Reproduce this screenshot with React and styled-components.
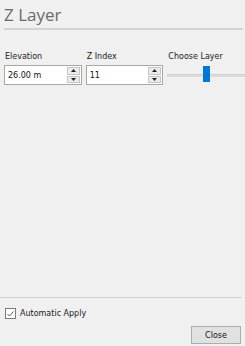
import React from 'react'
import styled, { createGlobalStyle } from 'styled-components'

const Global = createGlobalStyle`
  html, body {
    margin: 0;
    padding: 0;
    background: #f0f0f0;
  }
  body {
    font-family: 'DejaVu Sans', 'Liberation Sans', sans-serif;
  }
`

const Panel = styled.div`
  width: 245px;
  height: 346px;
  display: flex;
  flex-direction: column;
  background: #f0f0f0;
  box-sizing: border-box;
`

const Header = styled.div`
  padding: 4px 2px 0 4px;
`

const Title = styled.h1`
  margin: 0;
  font-family: 'Open Sans', 'Noto Sans', sans-serif;
  font-weight: 400;
  font-size: 17px;
  line-height: 22px;
  color: #6a6a6a;
`

const Rule = styled.div`
  height: 2px;
  margin-top: 2px;
  background: #d4d4d4;
`

const Fields = styled.div`
  display: flex;
  gap: 4px;
  padding: 22px 0 0 4px;
`

const Field = styled.div`
  display: flex;
  flex-direction: column;
  width: ${(p) => p.$width}px;
`

const Label = styled.span`
  font-size: 8px;
  line-height: 10px;
  color: #1a1a1a;
  margin-bottom: 3px;
  padding-left: 1px;
`

const Spin = styled.div`
  display: flex;
  align-items: center;
  height: 20px;
  box-sizing: border-box;
  border: 1px solid #a8a8a8;
  background: #fff;
  padding: 1px;
`

const SpinText = styled.span`
  flex: 1;
  font-size: 8px;
  color: #111;
  padding-left: 2px;
`

const Arrows = styled.div`
  display: flex;
  flex-direction: column;
  gap: 1px;
  width: 13px;
  height: 16px;
`

const Arrow = styled.div`
  flex: 1;
  display: flex;
  align-items: center;
  justify-content: center;
  background: #ebebeb;
  border: 1px solid #c6c6c6;
  box-sizing: border-box;
`

const Slider = styled.div`
  position: relative;
  height: 20px;
  display: flex;
  align-items: center;
`

const Track = styled.div`
  flex: 1;
  height: 2px;
  background: #dcdcdc;
  border-top: 1px solid #d0d0d0;
`

const Thumb = styled.div`
  position: absolute;
  left: 36px;
  top: 1px;
  width: 7px;
  height: 16px;
  background: #0078d7;
`

const Spacer = styled.div`
  flex: 1;
`

const Footer = styled.div`
  border-top: 1px solid #cfcfcf;
  margin-right: 4px;
  padding: 10px 0 2px 5px;
  display: flex;
  flex-direction: column;
`

const Check = styled.label`
  display: flex;
  align-items: center;
  gap: 4px;
  font-size: 8px;
  color: #1a1a1a;
`

const Box = styled.span`
  width: 9px;
  height: 9px;
  border: 1px solid #7a7a7a;
  background: #fff;
  display: flex;
  align-items: center;
  justify-content: center;
`

const Actions = styled.div`
  display: flex;
  justify-content: flex-end;
  margin-top: 7px;
`

const Button = styled.button`
  width: 50px;
  height: 18px;
  background: #e1e1e1;
  border: 1px solid #adadad;
  font-family: 'DejaVu Sans', sans-serif;
  font-size: 8px;
  color: #111;
  padding: 0;
`

const Up = () => (
  <svg width='5' height='3' viewBox='0 0 5 3'>
    <path d='M2.5 0L5 3H0z' fill='#222' />
  </svg>
)
const Down = () => (
  <svg width='5' height='3' viewBox='0 0 5 3'>
    <path d='M0 0h5L2.5 3z' fill='#222' />
  </svg>
)

const SpinBox = ({ value }) => (
  <Spin>
    <SpinText>{value}</SpinText>
    <Arrows>
      <Arrow>
        <Up />
      </Arrow>
      <Arrow>
        <Down />
      </Arrow>
    </Arrows>
  </Spin>
)

const App = () => {
  return (
    <Panel>
      <Global />
      <Header>
        <Title>Z Layer</Title>
        <Rule />
      </Header>
      <Fields>
        <Field $width={78}>
          <Label>Elevation</Label>
          <SpinBox value='26.00 m' />
        </Field>
        <Field $width={78}>
          <Label>Z Index</Label>
          <SpinBox value='11' />
        </Field>
        <Field $width={78}>
          <Label>Choose Layer</Label>
          <Slider>
            <Track />
            <Thumb />
          </Slider>
        </Field>
      </Fields>
      <Spacer />
      <Footer>
        <Check>
          <Box>
            <svg width='7' height='6' viewBox='0 0 7 6'>
              <path d='M0.5 3L2.5 5L6.5 0.5' fill='none' stroke='#555' strokeWidth='1' />
            </svg>
          </Box>
          Automatic Apply
        </Check>
        <Actions>
          <Button>Close</Button>
        </Actions>
      </Footer>
    </Panel>
  )
}

export default App
